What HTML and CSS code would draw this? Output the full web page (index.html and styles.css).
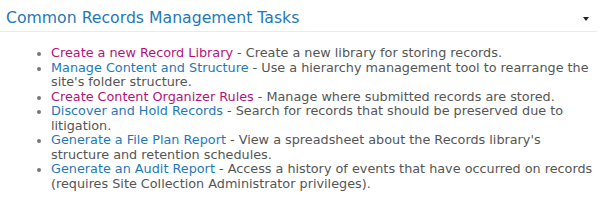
FILE: index.html
```html
<!DOCTYPE html>
<html>
<head>
  <meta charset="UTF-8">
  <link rel="stylesheet" href="styles.css">
</head>
<body>
  <div class="webpart">
    <div class="wp-header">
      <h2 class="wp-title">Common Records Management Tasks</h2>
      <span class="wp-menu"></span>
    </div>

    <ul class="task-list">
      <li><a href="#" class="visited">Create a new Record Library</a> - Create a new library for storing records.</li>
      <li><a href="#">Manage Content and Structure</a> - Use a hierarchy management tool to rearrange the site's folder structure.</li>
      <li><a href="#" class="visited">Create Content Organizer Rules</a> - Manage where submitted records are stored.</li>
      <li><a href="#">Discover and Hold Records</a> - Search for records that should be preserved due to litigation.</li>
      <li><a href="#">Generate a File Plan Report</a> - View a spreadsheet about the Records library's structure and retention schedules.</li>
      <li><a href="#">Generate an Audit Report</a> - Access a history of events that have occurred on records (requires Site Collection Administrator privileges).</li>
    </ul>
  </div>
</body>
</html>
```

FILE: styles.css
```css
* {
  box-sizing: border-box;
  margin: 0;
  padding: 0;
}

body {
  font-family: "DejaVu Sans", Verdana, sans-serif;
  background: #ffffff;
  color: #555555;
  width: 600px;
  height: 211px;
  overflow: hidden;
}

.wp-header {
  display: flex;
  align-items: center;
  justify-content: space-between;
  height: 32px;
  margin-right: 3px;
  padding: 4px 8px 0 6px;
  border-bottom: 1px solid #ebebeb;
}

.wp-title {
  font-weight: normal;
  font-size: 15.7px;
  color: #1f78b8;
}

.wp-menu {
  width: 0;
  height: 0;
  border-left: 3.5px solid transparent;
  border-right: 3.5px solid transparent;
  border-top: 4px solid #222;
  margin-top: 2px;
}

.task-list {
  list-style: none;
  padding: 14px 0 0 51px;
  font-size: 12.8px;
  line-height: 14.5px;
}

.task-list li {
  position: relative;
}

.task-list li::before {
  content: "";
  position: absolute;
  left: -14px;
  top: 6px;
  width: 4px;
  height: 4px;
  border-radius: 50%;
  background: #777;
}

.task-list a {
  color: #1f78b8;
  text-decoration: none;
}

.task-list a.visited {
  color: #b4137a;
}
```
